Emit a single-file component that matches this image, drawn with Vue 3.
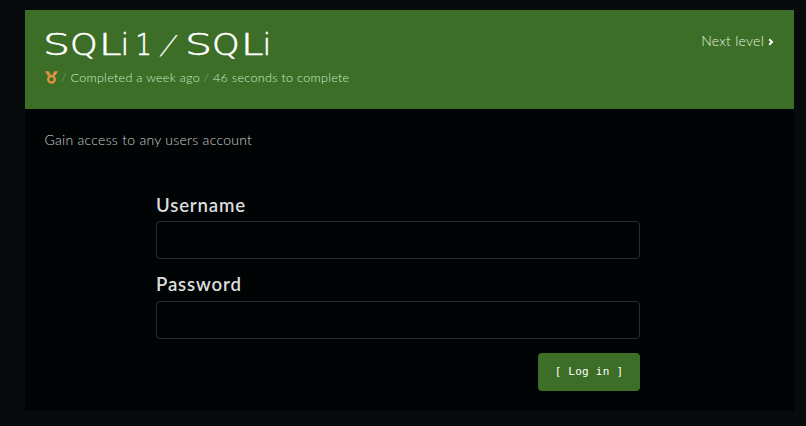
<script setup>
const title = [
  { c: 'S', k: 's' }, { c: 'Q', k: 'q' }, { c: 'L', k: 'l' }, { c: 'i', k: 'i' },
  { c: '1', k: 'one' }, { c: '/', k: 'slash' },
  { c: 'S', k: 's' }, { c: 'Q', k: 'q' }, { c: 'L', k: 'l' }, { c: 'i', k: 'i' },
]
</script>

<template>
  <main class="page">
    <section class="panel">
      <header class="head">
        <div>
          <h1 class="title"><span v-for="(g, n) in title" :key="n" class="cell" :class="g.k"><span class="glyph">{{ g.c }}</span></span></h1>
          <p class="meta">
            <svg class="medal" viewBox="0 0 13 13" width="13" height="13">
              <path d="M0 0.2H3.6L5.6 3.7L3 5.1ZM13 0.2H9.4L7.4 3.7L10 5.1Z" fill="#de9440" />
              <circle cx="6.5" cy="8.3" r="3.3" fill="none" stroke="#de9440" stroke-width="2.3" />
            </svg>
            <span class="sep">/</span><span class="done">Completed a week ago</span><span class="sep">/</span><span class="time">46 seconds to complete</span>
          </p>
        </div>
        <a class="next"><span>Next level</span>
          <svg viewBox="0 0 6 8" width="6" height="8"><path d="M1.2 1.3L4 4L1.2 6.7" fill="none" stroke="#fff" stroke-width="1.9" /></svg>
        </a>
      </header>
      <p class="brief">Gain access to any users account</p>
      <form class="form" @submit.prevent>
        <label class="label" for="user">Username</label>
        <input id="user" class="input" type="text">
        <label class="label raised" for="pass">Password</label>
        <input id="pass" class="input" type="password">
        <button class="button">[ Log in ]</button>
      </form>
    </section>
  </main>
</template>

<style>
body { margin: 0; background: #070b0c; }
</style>

<style scoped>
.page {
  box-sizing: border-box;
  height: 426px;
  padding: 10px 12px 15px 25px;
  background: #070b0c;
  font-family: Lato, "Liberation Sans", sans-serif;
  font-weight: 300;
}
.panel { height: 401px; background: #010405; }
.head {
  box-sizing: border-box;
  height: 99px;
  padding: 16px 20px 0 19.5px;
  display: flex;
  justify-content: space-between;
  background: #3c6e27;
}
.title {
  margin: 0;
  height: 37px;
  display: flex;
  font: 200 30px/37px "DejaVu Sans", sans-serif;
  color: #fff;
  -webkit-text-stroke: 0.6px #fff;
}
.cell { display: flex; justify-content: center; }
.glyph { display: block; }
.s { width: 25px; }
.q { width: 29px; }
.l { width: 23px; }
.i { width: 7px; }
.s .glyph { transform: scaleX(1.42); }
.q .glyph { transform: scaleX(1.17); }
.l .glyph { transform: scaleX(1.35); }
.one { width: 13px; margin-left: 9px; }
.one .glyph { transform: scaleX(0.85); }
.slash { width: 18px; margin: 0 9px 0 9px; }
.slash .glyph { font-family: Lato, sans-serif; font-weight: 300; font-size: 27px; transform: skewX(-20deg); -webkit-text-stroke: 0.5px #fff; }
.meta {
  margin: 5px 0 0;
  height: 18px;
  display: flex;
  align-items: center;
  font-size: 12.6px;
  line-height: 18px;
  letter-spacing: 0.28px;
  color: #d0e8c7;
  white-space: nowrap;
}
.meta span { padding-top: 1px; }
.sep { width: 13px; text-align: center; color: #8baf7c; }
.next {
  height: 20px;
  margin-top: 5px;
  display: flex;
  align-items: center;
  gap: 4px;
  font-size: 14px;
  line-height: 20px;
  letter-spacing: 0.25px;
  color: #e4f2de;
}
.next svg { margin-top: 2px; }
.brief {
  margin: 0;
  padding: 21px 20px 0 19.5px;
  height: 20px;
  font-size: 14px;
  line-height: 20px;
  letter-spacing: 0.28px;
  color: #cfd0cb;
}
.form {
  width: 484px;
  margin: 43px 0 0 131px;
  display: flex;
  flex-direction: column;
}
.label {
  height: 28px;
  font-size: 18.6px;
  font-weight: 600;
  line-height: 24px;
  letter-spacing: 0.85px;
  color: #dedede;
}
.raised { line-height: 22px; }
.input {
  box-sizing: border-box;
  height: 38px;
  margin: 0 0 14px;
  border: 1px solid #292c2d;
  border-radius: 4px;
  background: transparent;
  outline: none;
  color: #ddd;
}
.button {
  align-self: flex-end;
  width: 102px;
  height: 38px;
  padding: 0 0 2px;
  border: 0;
  border-radius: 4px;
  background: #3c6e27;
  color: #fff;
  font: 400 11px "DejaVu Sans Mono", monospace;
  letter-spacing: 0.25px;
}
</style>
